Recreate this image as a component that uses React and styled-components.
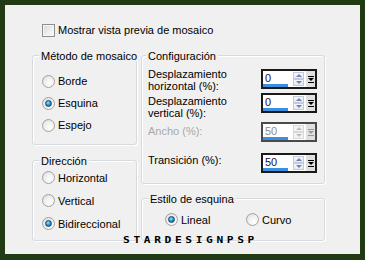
import React from 'react';
import styled, { createGlobalStyle, css } from 'styled-components';

const Global = createGlobalStyle`
  html, body { margin: 0; padding: 0; background: #203a14; }
  body { font-family: "Liberation Sans", Arial, sans-serif; font-size: 11px; color: #000; }
`;

const Frame = styled.div`
  width: 365px;
  height: 260px;
  box-sizing: border-box;
  background: #203a14;
  padding: 5px 5px 6px 5px;
`;

const Panel = styled.div`
  position: relative;
  height: 100%;
  box-sizing: border-box;
  background: #f0f0f0;
  padding: 19px 0 0 27px;
  display: flex;
  flex-direction: column;
`;

const CheckRow = styled.label`
  display: flex;
  align-items: center;
  gap: 3px;
  height: 13px;
  line-height: 13px;
  margin-left: 10px;
`;

const CheckBox = styled.span`
  width: 13px;
  height: 13px;
  box-sizing: border-box;
  border: 1px solid #8e8f8f;
  background: linear-gradient(135deg, #d6d6d6 0%, #f0f0f0 60%, #fafafa 100%);
  box-shadow: inset 0 0 0 1px #f6f6f6;
  flex: none;
`;

const Columns = styled.div`
  display: flex;
  gap: 4px;
  margin-top: 18px;
`;

const Column = styled.div`
  display: flex;
  flex-direction: column;
  width: ${p => p.$w}px;
  gap: ${p => p.$gap}px;
`;

const Group = styled.div`
  position: relative;
  box-sizing: border-box;
  height: ${p => p.$h}px;
  border: 1px solid #d5dadf;
  border-radius: 3px;
  box-shadow: inset 1px 1px 0 #ffffff, 1px 1px 0 #ffffff;
  padding: ${p => p.$pad};
`;

const Legend = styled.span`
  position: absolute;
  top: -6px;
  left: ${p => p.$lx ?? 6}px;
  padding: 0 2px;
  background: #f0f0f0;
  line-height: 12px;
  white-space: nowrap;
`;

const RadioRow = styled.label`
  display: flex;
  align-items: center;
  gap: 3px;
  height: ${p => p.$h ?? 22}px;
  width: ${p => (p.$w ? `${p.$w}px` : 'auto')};
  line-height: 12px;
`;

const RadioDot = styled.span`
  position: relative;
  flex: none;
  width: 13px;
  height: 13px;
  box-sizing: border-box;
  border-radius: 50%;
  border: 1px solid #a2a2a2;
  background: radial-gradient(circle at 65% 70%, #ffffff 0%, #eeeeee 55%, #d4d4d4 100%);
  ${p => p.$on && css`
    &::after {
      content: '';
      position: absolute;
      left: 2px;
      top: 2px;
      width: 7px;
      height: 7px;
      box-sizing: border-box;
      border-radius: 50%;
      border: 1px solid #17456f;
      background: radial-gradient(circle at 40% 35%, #a6e4ff 0%, #2c9ad6 45%, #0d5c98 100%);
    }
  `}
`;

const StyleRow = styled.div`
  display: flex;
  align-items: center;
`;

const ConfigRow = styled.div`
  display: flex;
  justify-content: space-between;
  align-items: flex-start;
  height: ${p => p.$h}px;
  margin-top: ${p => p.$mt}px;
`;

const Label = styled.div`
  line-height: 12px;
  padding-top: ${p => p.$pt ?? 0}px;
  color: ${p => (p.$disabled ? '#a8a8a8' : '#000')};
`;

const Spin = styled.div`
  display: flex;
  width: 56px;
  height: 20px;
  box-sizing: border-box;
  margin-top: ${p => p.$st ?? 0}px;
  border: 2px solid ${p => (p.$disabled ? '#4a4a4a' : '#1a1a1a')};
  background: #fff;
  flex: none;
`;

const Field = styled.div`
  width: 29px;
  display: flex;
  flex-direction: column;
  color: ${p => (p.$disabled ? '#8c8c8c' : '#1a0c3a')};
  font-size: 11px;
  line-height: 12px;
`;

const Value = styled.span`
  padding: 1px 0 0 2px;
`;

const Bar = styled.span`
  margin-top: auto;
  width: 25px;
  height: 3px;
  background: #3a8fe2;
`;

const Spinner = styled.div`
  width: 11px;
  display: flex;
  flex-direction: column;
  padding: 1px 0;
  box-sizing: border-box;
  margin-left: 1px;
`;

const SpinBtn = styled.span`
  flex: 1;
  display: flex;
  align-items: center;
  justify-content: center;
  box-sizing: border-box;
  border: 1px solid ${p => (p.$disabled ? '#d8d8d8' : '#c3cbdb')};
  background: ${p => (p.$disabled ? '#f4f4f4' : 'linear-gradient(#f6f8fc, #e4e9f3)')};
`;

const Drop = styled.div`
  width: 9px;
  margin-left: 2px;
  background: #e0e0e0;
  display: flex;
  align-items: center;
  justify-content: center;
`;

const Watermark = styled.div`
  position: absolute;
  left: 118px;
  top: 232px;
  font-family: "DejaVu Sans Mono", monospace;
  font-weight: bold;
  font-size: 8px;
  line-height: 8px;
  letter-spacing: 2.6px;
  transform: scaleX(1.4);
  transform-origin: left top;
  color: #000;
`;

function Tri({ up, color }) {
  return (
    <svg width="6" height="3" viewBox="0 0 6 3">
      {up ? <polygon points="0,3 6,3 3,0" fill={color} /> : <polygon points="0,0 6,0 3,3" fill={color} />}
    </svg>
  );
}

function DropGlyph({ color }) {
  return (
    <svg width="6" height="7" viewBox="0 0 6 7">
      <rect x="0" y="0" width="6" height="1" fill={color} />
      <polygon points="0,2 6,2 3,5" fill={color} />
      <rect x="0" y="6" width="6" height="1" fill={color} />
    </svg>
  );
}

function SpinBox({ value, disabled, st }) {
  const tri = disabled ? '#bdbdbd' : '#7183b8';
  return (
    <Spin $disabled={disabled} $st={st}>
      <Field $disabled={disabled}>
        <Value>{value}</Value>
        <Bar />
      </Field>
      <Spinner>
        <SpinBtn $disabled={disabled}><Tri up color={tri} /></SpinBtn>
        <SpinBtn $disabled={disabled}><Tri color={tri} /></SpinBtn>
      </Spinner>
      <Drop>
        <DropGlyph color={disabled ? '#9a9a9a' : '#000'} />
      </Drop>
    </Spin>
  );
}

function Radio({ label, on, h, w }) {
  return (
    <RadioRow $h={h} $w={w}>
      <RadioDot $on={on} />
      <span>{label}</span>
    </RadioRow>
  );
}

export default function App() {
  return (
    <>
      <Global />
      <Frame>
        <Panel>
          <CheckRow>
            <CheckBox />
            <span>Mostrar vista previa de mosaico</span>
          </CheckRow>
          <Columns>
            <Column $w={105} $gap={15}>
              <Group $h={90} $pad="14px 0 0 9px">
                <Legend>Método de mosaico</Legend>
                <Radio label="Borde" />
                <Radio label="Esquina" on />
                <Radio label="Espejo" />
              </Group>
              <Group $h={81} $pad="5px 0 0 9px">
                <Legend>Dirección</Legend>
                <Radio label="Horizontal" h={23} />
                <Radio label="Vertical" h={23} />
                <Radio label="Bidireccional" on h={23} />
              </Group>
            </Column>
            <Column $w={184} $gap={14}>
              <Group $h={129} $pad="0 7px 0 6px">
                <Legend $lx={4}>Configuración</Legend>
                <ConfigRow $h={24} $mt={12}>
                  <Label>Desplazamiento<br />horizontal (%):</Label>
                  <SpinBox value="0" st={1} />
                </ConfigRow>
                <ConfigRow $h={26} $mt={1}>
                  <Label $pt={2}>Desplazamiento<br />vertical (%):</Label>
                  <SpinBox value="0" />
                </ConfigRow>
                <ConfigRow $h={20} $mt={3}>
                  <Label $pt={3} $disabled>Ancho (%):</Label>
                  <SpinBox value="50" disabled />
                </ConfigRow>
                <ConfigRow $h={21} $mt={11}>
                  <Label $pt={1}>Transición (%):</Label>
                  <SpinBox value="50" />
                </ConfigRow>
              </Group>
              <Group $h={43} $pad="14px 0 0 23px">
                <Legend>Estilo de esquina</Legend>
                <StyleRow>
                  <Radio label="Lineal" on h={13} w={81} />
                  <Radio label="Curvo" h={13} />
                </StyleRow>
              </Group>
            </Column>
          </Columns>
          <Watermark>STARDESIGNPSP</Watermark>
        </Panel>
      </Frame>
    </>
  );
}
